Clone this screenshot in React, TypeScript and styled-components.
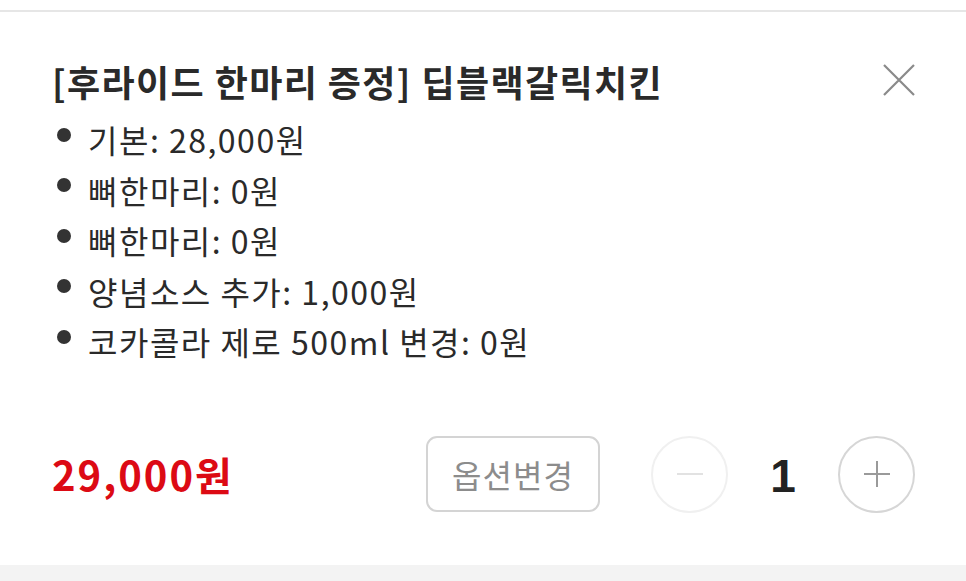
import React from "react";
import styled, { createGlobalStyle } from "styled-components";

const Global = createGlobalStyle`
  html, body { margin: 0; padding: 0; background: #ffffff; }
  body { font-family: "Noto Sans CJK KR", "Noto Sans", sans-serif; color: #222; }
  * { box-sizing: border-box; }
`;

const Page = styled.div`
  width: 966px;
  height: 581px;
  display: flex;
  flex-direction: column;
  background: #fff;
  overflow: hidden;
`;

const TopDivider = styled.div`
  height: 12px;
  flex: none;
  border-bottom: 2px solid #e6e6e6;
`;

const Card = styled.section`
  flex: 1;
  display: flex;
  flex-direction: column;
  padding: 45px 51px 0 52px;
`;

const Header = styled.div`
  display: flex;
  align-items: flex-start;
  justify-content: space-between;
`;

const Title = styled.h2`
  margin: 0;
  font-size: 36px;
  line-height: 48px;
  font-weight: 700;
  color: #2a2a2a;
  letter-spacing: 1.4px;
`;

const CloseButton = styled.button`
  width: 32px;
  height: 32px;
  margin-top: 7px;
  padding: 0;
  border: none;
  background: transparent;
  display: flex;
  align-items: center;
  justify-content: center;
`;

const OptionList = styled.ul`
  margin: 9px 0 0 0;
  padding: 0;
  list-style: none;
  display: flex;
  flex-direction: column;
`;

const OptionItem = styled.li`
  display: flex;
  align-items: center;
  height: 50.5px;
  font-size: 32px;
  color: #2a2a2a;
  letter-spacing: 1.5px;
  &::before {
    content: "";
    width: 14px;
    height: 14px;
    border-radius: 50%;
    background: #333;
    margin: -9px 17px 0 5px;
    flex: none;
  }
`;

const Footer = styled.div`
  margin-top: 69px;
  display: flex;
  align-items: center;
`;

const Price = styled.div`
  flex: 1;
  font-size: 40px;
  font-weight: 700;
  color: #dc0a14;
  letter-spacing: 2px;
`;

const OptionButton = styled.button`
  width: 174px;
  height: 76px;
  border: 2px solid #d4d4d4;
  border-radius: 11px;
  background: #fff;
  font-family: inherit;
  font-size: 32px;
  letter-spacing: 1px;
  color: #8c8c8c;
  padding: 0;
  margin-right: 51px;
`;

const Stepper = styled.div`
  display: flex;
  align-items: center;
`;

const RoundButton = styled.button<{ $disabled?: boolean }>`
  width: 77px;
  height: 77px;
  border-radius: 50%;
  border: 2px solid ${(p) => (p.$disabled ? "#f0f0f0" : "#d6d6d6")};
  background: #fff;
  padding: 0;
  display: flex;
  align-items: center;
  justify-content: center;
`;

const Count = styled.span`
  width: 110px;
  text-align: center;
  font-family: "Liberation Sans", Arial, sans-serif;
  font-size: 46px;
  font-weight: 700;
  color: #222;
  padding-top: 4px;
`;

const BottomBand = styled.div`
  height: 16px;
  flex: none;
  background: #f3f3f3;
`;

const options = [
  "기본: 28,000원",
  "뼈한마리: 0원",
  "뼈한마리: 0원",
  "양념소스 추가: 1,000원",
  "코카콜라 제로 500ml 변경: 0원",
];

export default function App() {
  return (
    <Page>
      <Global />
      <TopDivider />
      <Card>
        <Header>
          <Title>[후라이드 한마리 증정] 딥블랙갈릭치킨</Title>
          <CloseButton aria-label="닫기">
            <svg width="32" height="32" viewBox="0 0 32 32">
              <path d="M1 1 L31 31 M31 1 L1 31" stroke="#8a8a8a" strokeWidth="2.2" fill="none" />
            </svg>
          </CloseButton>
        </Header>
        <OptionList>
          {options.map((o, i) => (
            <OptionItem key={i}>{o}</OptionItem>
          ))}
        </OptionList>
        <Footer>
          <Price>29,000원</Price>
          <OptionButton>옵션변경</OptionButton>
          <Stepper>
            <RoundButton $disabled aria-label="감소">
              <svg width="28" height="4" viewBox="0 0 28 4">
                <path d="M1 2 H27" stroke="#e2e2e2" strokeWidth="2" />
              </svg>
            </RoundButton>
            <Count>1</Count>
            <RoundButton aria-label="증가">
              <svg width="28" height="28" viewBox="0 0 28 28">
                <path d="M1 14 H27 M14 1 V27" stroke="#9a9a9a" strokeWidth="2" />
              </svg>
            </RoundButton>
          </Stepper>
        </Footer>
      </Card>
      <BottomBand />
    </Page>
  );
}
